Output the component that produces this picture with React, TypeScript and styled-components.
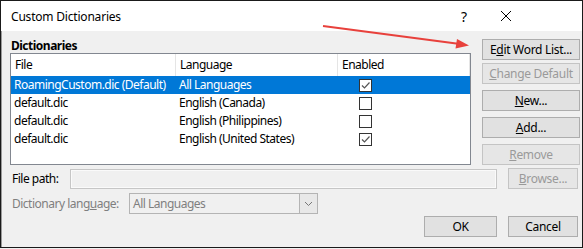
import React from "react"
import styled, { createGlobalStyle } from "styled-components"

const GlobalStyle = createGlobalStyle`
    html, body {
        margin: 0;
        padding: 0;
        background: #f0f0f0;
    }
    body {
        font-family: "Noto Sans", "Open Sans", sans-serif;
        font-size: 12px;
        letter-spacing: -0.5px;
        color: #000;
    }
`

const rows = [
    { file: "RoamingCustom.dic (Default)", lang: "All Languages", on: true, selected: true },
    { file: "default.dic", lang: "English (Canada)", on: false },
    { file: "default.dic", lang: "English (Philippines)", on: false },
    { file: "default.dic", lang: "English (United States)", on: true },
]

const Key = ({ children }: { children: React.ReactNode }) => <u>{children}</u>

const CheckBox = ({ checked }: { checked: boolean }) => (
    <Box>
        {checked && (
            <svg width="11" height="11" viewBox="0 0 11 11">
                <path d="M2 5.5 L4.5 8 L9.5 2.5" fill="none" stroke="#555" strokeWidth="1.2" />
            </svg>
        )}
    </Box>
)

export default function App() {
    return (
        <>
            <GlobalStyle />
            <Dialog>
                <TitleBar>
                    <span>Custom Dictionaries</span>
                    <TitleIcons>
                        <span>?</span>
                        <svg width="12" height="12" viewBox="0 0 12 12">
                            <path d="M1 1 L11 11 M11 1 L1 11" stroke="#000" strokeWidth="1" />
                        </svg>
                    </TitleIcons>
                </TitleBar>
                <Body>
                    <TopSection>
                        <ListColumn>
                            <GroupLabel>Dictionaries</GroupLabel>
                            <Table>
                                <HeaderRow>
                                    <HeadCell $w={165}>File</HeadCell>
                                    <HeadCell $w={162}>Language</HeadCell>
                                    <HeadCell $w={132}>Enabled</HeadCell>
                                </HeaderRow>
                                {rows.map((r, i) => (
                                    <Row key={i} $selected={!!r.selected}>
                                        <Cell $w={165}>{r.file}</Cell>
                                        <Cell $w={162}>{r.lang}</Cell>
                                        <CheckCell>
                                            <CheckBox checked={r.on} />
                                        </CheckCell>
                                    </Row>
                                ))}
                            </Table>
                        </ListColumn>
                        <ButtonColumn>
                            <SideButton $gap={0}>E<Key>d</Key>it Word List...</SideButton>
                            <SideButton $gap={3} disabled><Key>C</Key>hange Default</SideButton>
                            <SideButton $gap={6}><Key>N</Key>ew...</SideButton>
                            <SideButton $gap={6}><Key>A</Key>dd...</SideButton>
                            <SideButton $gap={6} disabled><Key>R</Key>emove</SideButton>
                        </ButtonColumn>
                    </TopSection>

                    <FieldRow>
                        <FieldLabel $width={58}>File path:</FieldLabel>
                        <PathInput />
                        <Button $width={70} disabled><Key>B</Key>rowse...</Button>
                    </FieldRow>

                    <LanguageRow>
                        <FieldLabel $width={117} $muted>Dictionary lang<Key>u</Key>age:</FieldLabel>
                        <Select>
                            <SelectText>All Languages</SelectText>
                            <DropButton>
                                <svg width="9" height="6" viewBox="0 0 9 6">
                                    <path d="M1 1 L4.5 4.5 L8 1" fill="none" stroke="#777" strokeWidth="1" />
                                </svg>
                            </DropButton>
                        </Select>
                    </LanguageRow>

                    <Footer>
                        <Button $width={73}>OK</Button>
                        <Button $width={70}>Cancel</Button>
                    </Footer>
                </Body>
                <Arrow width="583" height="60" viewBox="0 0 583 60">
                    <line x1="323" y1="26" x2="460" y2="44" stroke="#e8413c" strokeWidth="2.2" />
                    <path d="M469 45.5 L457 39 L455.5 48.5 Z" fill="#e8413c" />
                </Arrow>
            </Dialog>
        </>
    )
}

const Dialog = styled.div`
    position: relative;
    box-sizing: border-box;
    width: 583px;
    height: 248px;
    border: 1px solid #1a1a1a;
    box-shadow: inset 1px 0 0 #9a9a9a;
    background: #f0f0f0;
    display: flex;
    flex-direction: column;
    overflow: hidden;
`

const TitleBar = styled.div`
    height: 30px;
    background: #fff;
    display: flex;
    align-items: center;
    justify-content: space-between;
    padding: 0 0 0 10px;
    font-size: 12px;
    letter-spacing: -0.2px;
`

const TitleIcons = styled.div`
    display: flex;
    align-items: center;
    gap: 33px;
    padding-right: 70px;
    font-size: 14px;
`

const Body = styled.div`
    flex: 1;
    display: flex;
    flex-direction: column;
    padding: 8px 1px 0 9px;
`

const TopSection = styled.div`
    display: flex;
    gap: 11px;
`

const ListColumn = styled.div`
    display: flex;
    flex-direction: column;
`

const GroupLabel = styled.div`
    font-weight: 700;
    height: 14px;
    line-height: 14px;
    padding-left: 1px;
`

const Table = styled.div`
    box-sizing: border-box;
    width: 461px;
    height: 112px;
    border: 1px solid #828790;
    background: #fff;
`

const HeaderRow = styled.div`
    display: flex;
    height: 22px;
`

const HeadCell = styled.div<{ $w: number }>`
    box-sizing: border-box;
    width: ${p => p.$w}px;
    padding-left: 4px;
    line-height: 22px;
    border-right: 1px solid #e5e5e5;
`

const Row = styled.div<{ $selected: boolean }>`
    display: flex;
    height: 18px;
    width: 459px;
    background: ${p => (p.$selected ? "#0078d7" : "transparent")};
    color: ${p => (p.$selected ? "#fff" : "#000")};
`

const Cell = styled.div<{ $w: number }>`
    box-sizing: border-box;
    width: ${p => p.$w}px;
    padding-left: 3px;
    line-height: 18px;
    white-space: nowrap;
    overflow: hidden;
`

const CheckCell = styled.div`
    display: flex;
    align-items: center;
    padding-left: 21px;
`

const Box = styled.div`
    box-sizing: border-box;
    width: 13px;
    height: 13px;
    border: 1px solid #333;
    background: #fff;
    display: flex;
    align-items: center;
    justify-content: center;
`

const ButtonColumn = styled.div`
    display: flex;
    flex-direction: column;
`

const Button = styled.button<{ $width: number }>`
    box-sizing: border-box;
    width: ${p => p.$width}px;
    height: 21px;
    padding: 0;
    font-family: inherit;
    font-size: 12px;
    letter-spacing: -0.3px;
    background: #e1e1e1;
    border: 1px solid #adadad;
    color: #000;
    &:disabled {
        background: #e6e6e6;
        border-color: #c4c4c4;
        color: #9a9a9a;
    }
`

const SideButton = styled(Button).attrs({ $width: 98 })<{ $gap: number }>`
    margin-top: ${p => p.$gap}px;
`

const FieldRow = styled.div`
    display: flex;
    align-items: center;
    margin-top: 3px;
    padding-right: 3px;
`

const FieldLabel = styled.div<{ $width: number; $muted?: boolean }>`
    width: ${p => p.$width}px;
    padding-left: 2px;
    color: ${p => (p.$muted ? "#7f7f7f" : "#000")};
`

const PathInput = styled.div`
    box-sizing: border-box;
    width: 428px;
    height: 20px;
    margin-right: 11px;
    border: 1px solid #c6c6c6;
    background: #f0f0f0;
    box-shadow: inset 0 0 0 1px #fafafa;
`

const LanguageRow = styled.div`
    display: flex;
    align-items: center;
    margin-top: 4px;
`

const Select = styled.div`
    display: flex;
    align-items: stretch;
    height: 21px;
`

const SelectText = styled.div`
    box-sizing: border-box;
    width: 170px;
    border: 1px solid #b4b4b4;
    border-right: none;
    background: #f0f0f0;
    color: #7f7f7f;
    padding-left: 3px;
    line-height: 19px;
`

const DropButton = styled.div`
    box-sizing: border-box;
    width: 19px;
    border: 1px solid #b4b4b4;
    background: #e8e8e8;
    display: flex;
    align-items: center;
    justify-content: center;
`

const Footer = styled.div`
    display: flex;
    justify-content: flex-end;
    gap: 11px;
    margin-top: 2px;
    padding-right: 3px;
`

const Arrow = styled.svg`
    position: absolute;
    left: -1px;
    top: -1px;
    pointer-events: none;
`
